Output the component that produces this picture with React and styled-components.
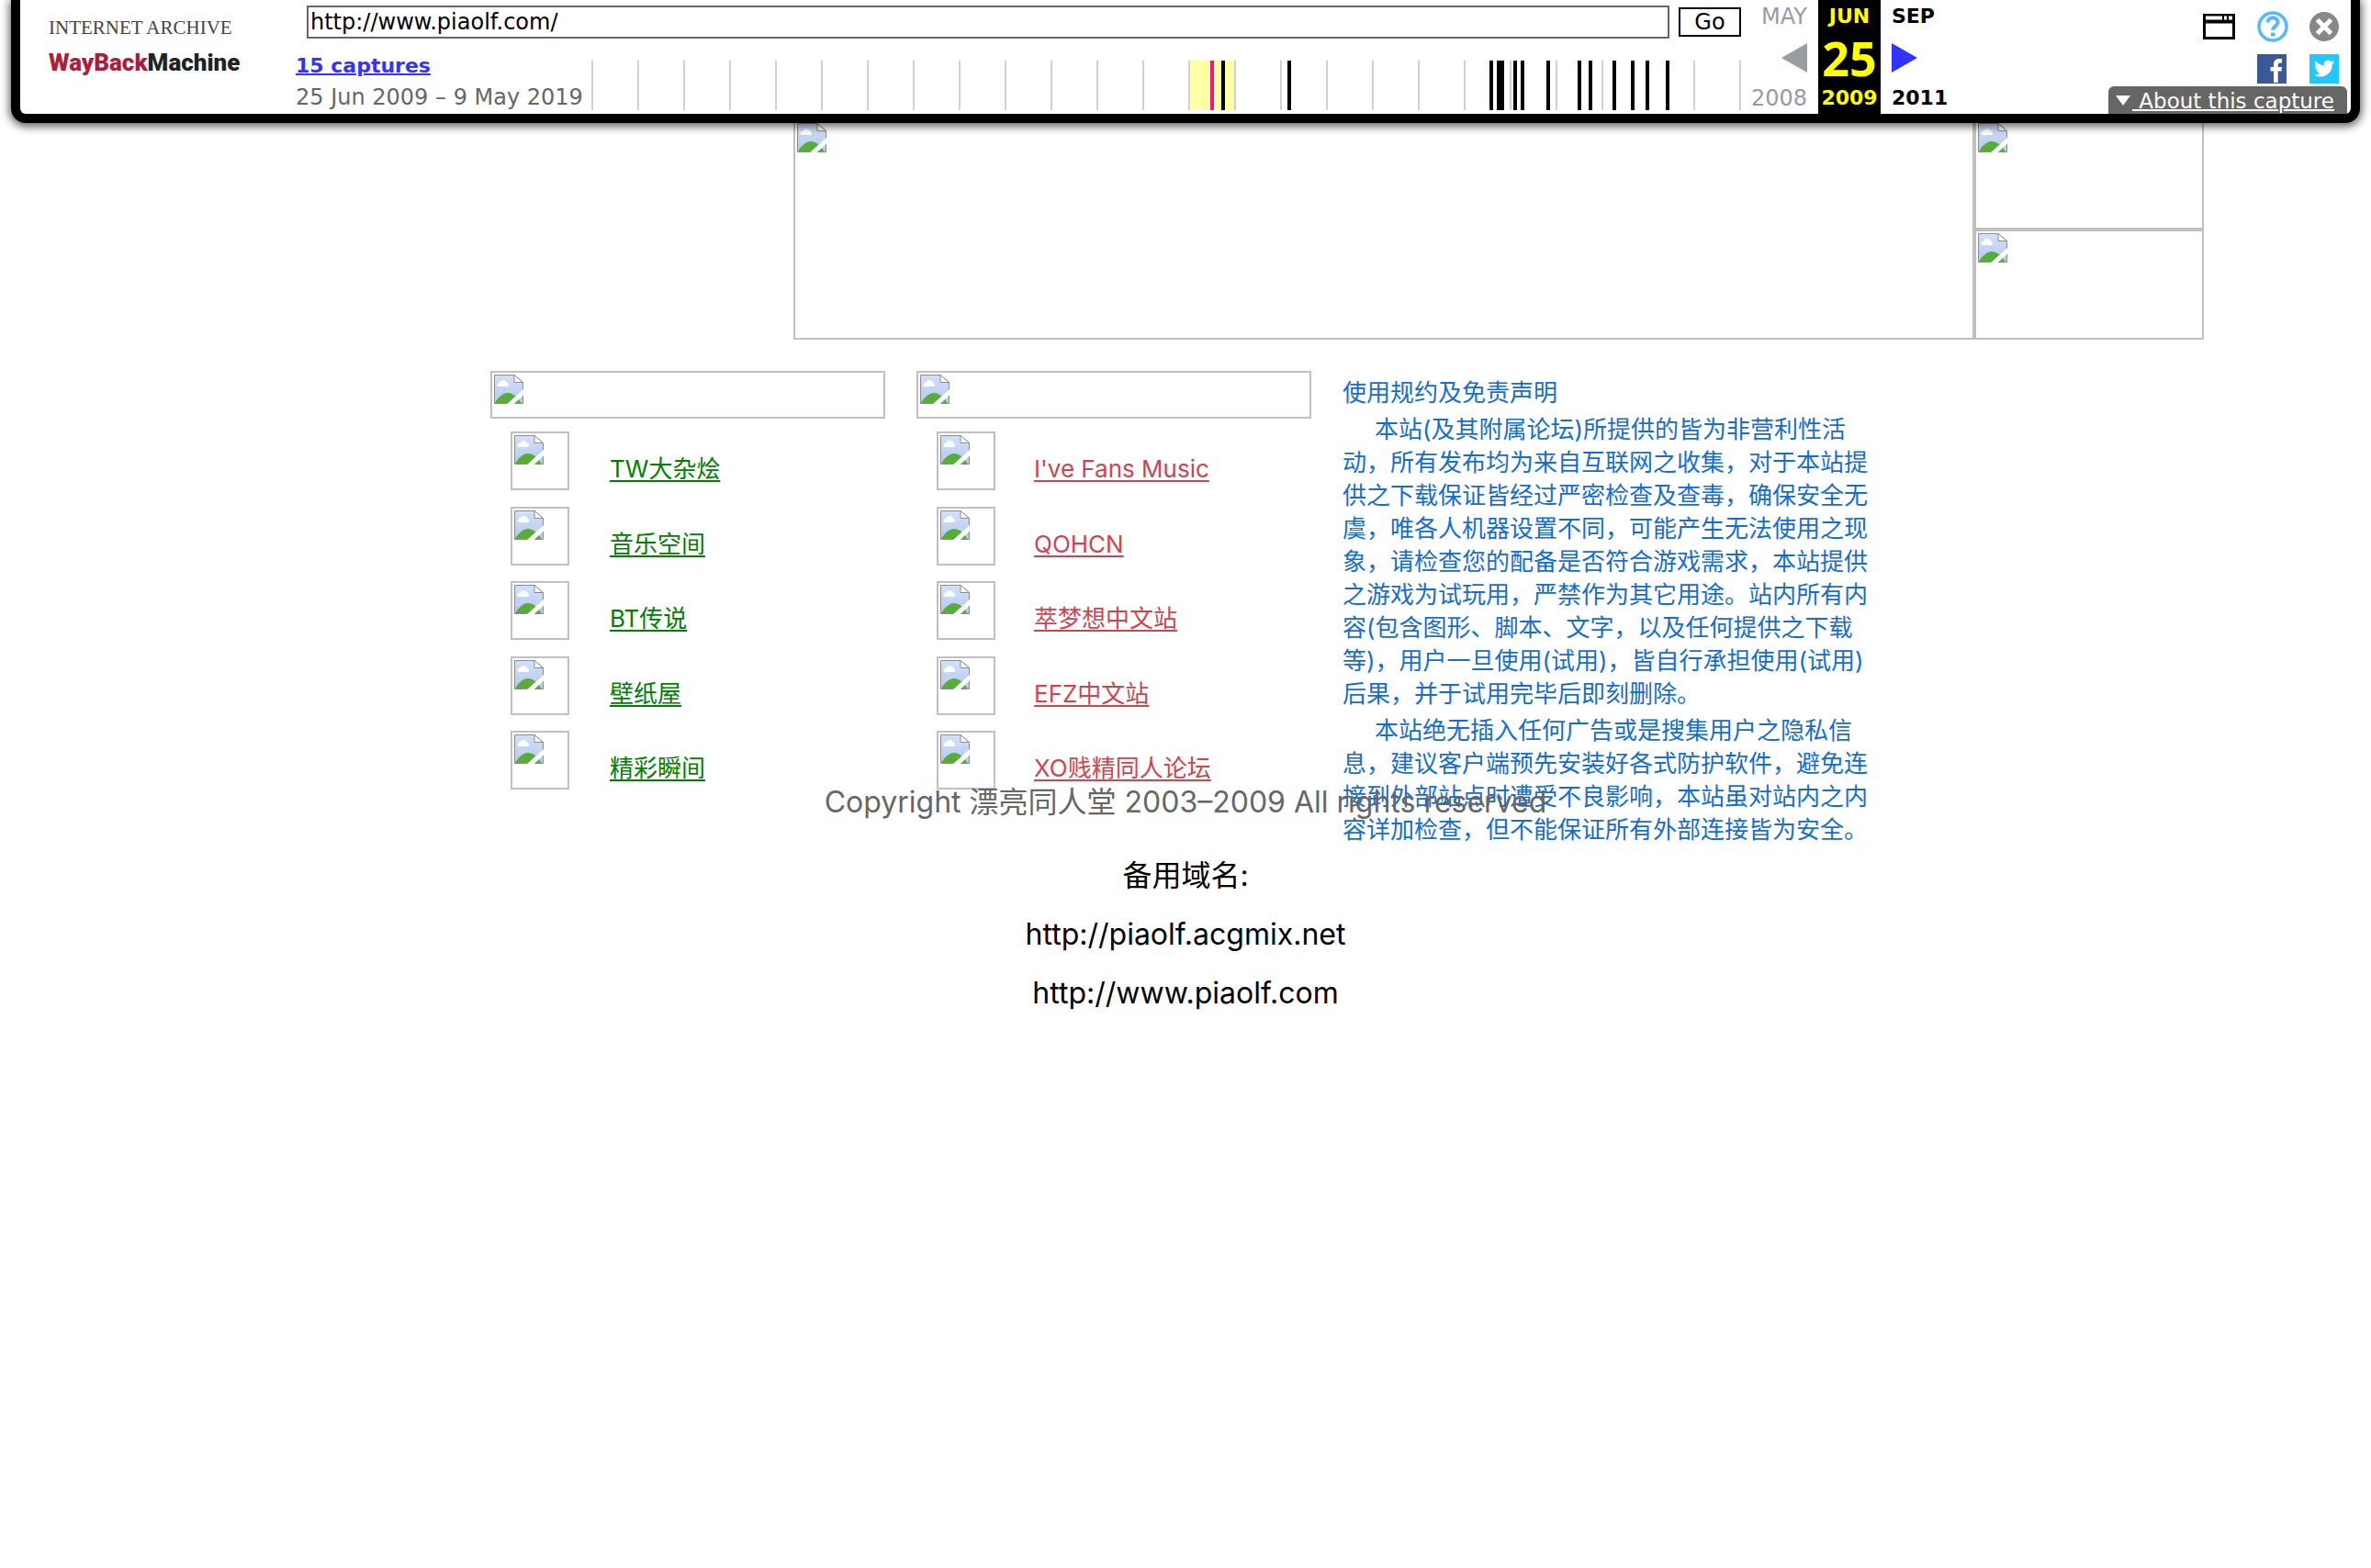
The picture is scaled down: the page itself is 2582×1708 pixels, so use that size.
import React from "react";
import styled, { createGlobalStyle } from "styled-components";

const GlobalStyle = createGlobalStyle`
  *, *::before, *::after { box-sizing: border-box; }
  body {
    margin: 0;
    background: #fff;
    color: #000;
    font-family: Inter, "Noto Sans CJK SC", sans-serif;
    text-spacing-trim: space-all;
  }
  p, h1, h2, ul { margin: 0; padding: 0; font-weight: 400; }
  a { color: inherit; }
`;

/* ---------- archive toolbar ---------- */

const Toolbar = styled.header`
  position: relative;
  z-index: 2;
  display: flex;
  height: 134px;
  margin: 0 12px;
  padding-left: 31px;
  background: #fff;
  border: 10px solid #000;
  border-top: 0;
  border-radius: 0 0 16px 16px;
  box-shadow: 0 2px 10px 2px rgba(0, 0, 0, 0.6);
  font-family: "DejaVu Sans", sans-serif;
  font-size: 24px;
  line-height: 34px;
`;

const Logo = styled.a`
  display: flex;
  flex-direction: column;
  width: 269px;
  padding-top: 20px;
  color: #222;
  text-decoration: none;
`;

const LogoTop = styled.span`
  font: 21px/20px "Liberation Serif", serif;
  color: #444;
`;

const LogoName = styled.span`
  font: 900 26px/56px Roboto, sans-serif;
`;

const LogoRed = styled.span`
  color: #b01c3c;
`;

const Center = styled.div`
  display: flex;
  flex-direction: column;
  gap: 24px;
  padding-top: 6px;
`;

const SearchRow = styled.form`
  display: flex;
  align-items: center;
  gap: 10px;
  height: 36px;
  padding-left: 12px;
`;

const UrlInput = styled.input`
  flex: 1;
  height: 36px;
  padding: 0 2px;
  border: 2px solid #666;
  border-radius: 0;
  background: #fff;
  color: #000;
  font: 24px/32px "DejaVu Sans", sans-serif;
  outline: 0;
`;

const GoButton = styled.button`
  width: 68px;
  height: 32px;
  padding: 0;
  border: 2px solid #000;
  background: #fff;
  color: #000;
  font: 24px/28px "DejaVu Sans", sans-serif;
`;

const CaptureRow = styled.div`
  display: flex;
`;

const CaptureInfo = styled.div`
  display: flex;
  flex-direction: column;
  width: 322px;
  margin-top: -11px;
  color: #666;
`;

const CaptureLink = styled.a`
  color: #33f;
  font-size: 22px;
  font-weight: 700;
  text-decoration-thickness: 2px;
`;

const Chart = styled.svg`
  display: block;
`;

const Months = styled.nav`
  display: flex;
`;

const Month = styled.div`
  display: flex;
  flex-direction: column;
  align-items: ${(p) => p.$align};
  justify-content: space-between;
  width: ${(p) => p.$width}px;
  height: 124px;
  padding: 1px ${(p) => p.$pad}px 0;
  background: ${(p) => p.$bg || "transparent"};
  color: ${(p) => p.$color};
  font-size: ${(p) => (p.$bold ? 22 : 24)}px;
  font-weight: ${(p) => (p.$bold ? 700 : 400)};
`;

const Day = styled.strong`
  font: bold 52px/50px "Noto Sans", sans-serif;
`;

const ArrowLink = styled.a`
  display: flex;
`;

const Tools = styled.div`
  display: flex;
  flex-direction: column;
  align-items: flex-end;
  justify-content: space-between;
  margin-left: auto;
  padding: 12px 4px 0 0;
`;

const IconGrid = styled.div`
  display: grid;
  grid-template-columns: 36px 34px 34px;
  grid-template-rows: 34px 34px;
  gap: 12px 23px;
  align-items: center;
  padding-right: 7px;
`;

const IconLink = styled.a`
  display: flex;
  grid-column: ${(p) => p.$col};
`;

const IconButton = styled.button`
  display: flex;
  padding: 0;
  border: 0;
  background: none;
`;

const About = styled.a`
  display: flex;
  align-items: center;
  gap: 2px;
  width: 260px;
  height: 30px;
  padding: 1px 8px 0;
  border-radius: 6px 6px 0 0;
  background: #666;
  color: #fff;
  font-size: 23px;
  line-height: 30px;
  text-decoration: none;
`;

const AboutText = styled.span`
  white-space: pre;
  text-decoration: underline 2px;
`;

/* ---------- archived page ---------- */

const Page = styled.main`
  width: 1514px;
  margin: -4px auto 0;
`;

const Hero = styled.div`
  display: grid;
  grid-template-columns: 1286px 250px;
  grid-template-rows: 120px 120px;
  width: max-content;
  margin-left: 330px;
`;

const Frame = styled.div`
  display: block;
  flex: none;
  width: ${(p) => p.$w || "auto"};
  height: ${(p) => p.$h || "auto"};
  grid-row: ${(p) => p.$rows || "auto"};
  padding: 2px;
  border: 2px solid #c0c0c0;
`;

const Columns = styled.div`
  display: grid;
  grid-template-columns: 430px 430px 1fr;
  gap: 34px;
  align-items: start;
  margin-top: 34px;
`;

const LinkColumn = styled.section`
  color: ${(p) => p.$color};
`;

const LinkList = styled.ul`
  display: grid;
  grid-auto-rows: 1fr;
  height: 408px;
  margin-top: 14px;
  padding-left: 22px;
  list-style: none;
`;

const LinkRow = styled.li`
  display: flex;
  gap: ${(p) => p.$gap}px;
`;

const SiteLink = styled.a`
  margin-top: 23px;
  font-size: 26px;
  line-height: 36px;
  text-decoration-thickness: 2px;
  text-underline-offset: 3px;
`;

const Disclaimer = styled.section`
  display: flex;
  flex-direction: column;
  gap: 4px;
  width: 580px;
  padding-top: 6px;
  color: #146dd0;
  font-size: 26px;
  line-height: 36px;
`;

const Title = styled.h2`
  font-size: 26px;
  line-height: 36px;
`;

const Clause = styled.p`
  text-indent: 35px;
`;

const Footer = styled.footer`
  position: relative;
  display: flex;
  flex-direction: column;
  align-items: center;
  gap: 24px;
  margin-top: -68px;
  font-size: 32px;
  line-height: 40px;
`;

const Copyright = styled.p`
  margin-bottom: 16px;
  color: #666;
`;

function BrokenIcon() {
  return (
    <svg width="32" height="32" viewBox="0 0 32 32" aria-hidden="true">
      <defs>
        <linearGradient id="sky" x1="0" y1="0" x2="0" y2="1">
          <stop offset="0" stopColor="#d3e1fb" />
          <stop offset="1" stopColor="#b4c8ec" />
        </linearGradient>
      </defs>
      <path d="M.5 .5H22L31.5 8.500V31.500H.5Z" fill="url(#sky)" stroke="#8c8c8c" />
      <path d="M22 .5V8.500H31.500Z" fill="#fff" stroke="#8c8c8c" />
      <path d="M4.500 13a2.300 2.300 0 0 1 1.500-4.200 4.500 4.500 0 0 1 8.300 0A2.300 2.300 0 0 1 15 13Z" fill="#fff" />
      <path d="M1 31C5 24 10 20 15 20c6 0 11 5 14.500 11Z" fill="#58ad38" />
      <path d="M13.500 32.500 32.500 15.500V22L21 32.500Z" fill="#fff" />
    </svg>
  );
}

function BrokenImage(props) {
  return (
    <Frame {...props}>
      <BrokenIcon />
    </Frame>
  );
}

const captures = [
  [688, 4], [760, 4], [980, 4], [990, 8], [1006, 4], [1014, 4], [1042, 4],
  [1076, 4], [1088, 4], [1114, 4], [1134, 4], [1150, 4], [1172, 4],
];

function CaptureChart() {
  const years = Array.from({ length: 26 }, (_, i) => i * 50);
  return (
    <Chart width="1252" height="54" viewBox="0 0 1252 54" aria-label="Captures per year">
      <rect x="652" width="48" height="54" fill="#ffffa5" />
      {years.map((x) => (
        <rect key={x} x={x} width="2" height="54" fill="#d0d0d0" />
      ))}
      {captures.map(([x, w]) => (
        <rect key={x} x={x - w / 2} width={w} height="54" fill="#000" />
      ))}
      <rect x="674" width="4" height="54" fill="#f0148c" />
    </Chart>
  );
}

const greenLinks = ["TW大杂烩", "音乐空间", "BT传说", "壁纸屋", "精彩瞬间"];
const redLinks = ["I've Fans Music", "QOHCN", "萃梦想中文站", "EFZ中文站", "XO贱精同人论坛"];

function LinkSection({ color, links, gap }) {
  return (
    <LinkColumn $color={color}>
      <BrokenImage $h="52px" />
      <LinkList>
        {links.map((t) => (
          <LinkRow key={t} $gap={gap}>
            <BrokenImage $w="64px" $h="64px" />
            <SiteLink href="#">{t}</SiteLink>
          </LinkRow>
        ))}
      </LinkList>
    </LinkColumn>
  );
}

export default function App() {
  return (
    <>
      <GlobalStyle />
      <Toolbar>
        <Logo href="#">
          <LogoTop>INTERNET ARCHIVE</LogoTop>
          <LogoName>
            <LogoRed>WayBack</LogoRed>Machine
          </LogoName>
        </Logo>
        <Center>
          <SearchRow onSubmit={(e) => e.preventDefault()}>
            <UrlInput aria-label="URL" defaultValue="http://www.piaolf.com/" />
            <GoButton type="submit">Go</GoButton>
          </SearchRow>
          <CaptureRow>
            <CaptureInfo>
              <CaptureLink href="#">15 captures</CaptureLink>
              <span>25 Jun 2009 – 9 May 2019</span>
            </CaptureInfo>
            <CaptureChart />
          </CaptureRow>
        </Center>
        <Months>
          <Month $width={84} $pad={12} $align="flex-end" $color="#99a">
            <span>MAY</span>
            <ArrowLink href="#" aria-label="Previous capture">
              <svg width="28" height="32" viewBox="0 0 28 32">
                <path d="M28 0V32L0 16Z" fill="#999ca0" />
              </svg>
            </ArrowLink>
            <span>2008</span>
          </Month>
          <Month $width={68} $pad={0} $align="center" $bg="#000" $color="#ff0" $bold>
            <span>JUN</span>
            <Day>25</Day>
            <span>2009</span>
          </Month>
          <Month $width={100} $pad={12} $align="flex-start" $color="#000" $bold>
            <span>SEP</span>
            <ArrowLink href="#" aria-label="Next capture">
              <svg width="28" height="32" viewBox="0 0 28 32">
                <path d="M0 0V32L28 16Z" fill="#33f" />
              </svg>
            </ArrowLink>
            <span>2011</span>
          </Month>
        </Months>
        <Tools>
          <IconGrid>
            <IconLink href="#" $col={1} aria-label="Screenshot">
              <svg width="35" height="30" viewBox="0 0 35 30">
                <path d="M0 1H35V29H0Z" fill="#000" />
                <path d="M3 3.500H21V7.500H3ZM23 3.500H26V7.500H23ZM28 3.500H32V7.500H28ZM3 11.500H32V26H3Z" fill="#fff" />
              </svg>
            </IconLink>
            <IconLink href="#" $col={2} aria-label="Help">
              <svg width="34" height="34" viewBox="0 0 34 34">
                <circle cx="17" cy="17" r="15" fill="#fff" stroke="#55baf8" strokeWidth="3.500" />
                <path d="M11.500 12.500c0-7 11.500-6.500 11 .2-.3 3.800-5.300 3.800-5.300 8" fill="none" stroke="#55baf8" strokeWidth="4.200" />
                <rect x="15" y="23.500" width="4.500" height="4" fill="#55baf8" />
              </svg>
            </IconLink>
            <IconButton type="button" aria-label="Close">
              <svg width="32" height="32" viewBox="0 0 32 32">
                <circle cx="16" cy="16" r="16" fill="#888" />
                <path d="M8.500 8.500 23.500 23.500M23.500 8.500 8.500 23.500" stroke="#fff" strokeWidth="5" />
              </svg>
            </IconButton>
            <IconLink href="#" $col={2} aria-label="Facebook">
              <svg width="32" height="32" viewBox="0 0 32 32">
                <rect width="32" height="32" fill="#3b5998" />
                <path d="M18 31V18.500H14.500V14H18V11C18 7 20.500 5 24 5H27V9.500H25C23.300 9.500 22.700 10.300 22.700 11.800V14H27L26.400 18.500H22.700V31Z" fill="#fff" />
              </svg>
            </IconLink>
            <IconLink href="#" $col={3} aria-label="Twitter">
              <svg width="32" height="32" viewBox="0 0 32 32">
                <rect width="32" height="32" fill="#20c8ff" />
                <path transform="translate(5 4.500) scale(.92)" d="M24 4.600a10 10 0 0 1-2.800.8 5 5 0 0 0 2.100-2.700 10 10 0 0 1-3.100 1.200 4.900 4.900 0 0 0-8.400 4.500A14 14 0 0 1 1.700 3.100a4.900 4.900 0 0 0 1.500 6.600 5 5 0 0 1-2.200-.6 4.900 4.900 0 0 0 3.900 4.900 5 5 0 0 1-2.200.1 4.900 4.900 0 0 0 4.600 3.400A10 10 0 0 1 0 19.500a14 14 0 0 0 21.500-12.400A10 10 0 0 0 24 4.600Z" fill="#fff" />
              </svg>
            </IconLink>
          </IconGrid>
          <About href="#">
            <svg width="16" height="11" viewBox="0 0 16 11" aria-hidden="true">
              <path d="M0 0H16L8 11Z" fill="#fff" />
            </svg>
            <AboutText> About this capture</AboutText>
          </About>
        </Tools>
      </Toolbar>

      <Page>
        <Hero>
          <BrokenImage $rows="1 / 3" />
          <BrokenImage />
          <BrokenImage />
        </Hero>
        <Columns>
          <LinkSection color="#008000" links={greenLinks} gap={44} />
          <LinkSection color="#cf454f" links={redLinks} gap={42} />
          <Disclaimer>
            <Title>使用规约及免责声明</Title>
            <Clause>
              本站(及其附属论坛)所提供的皆为非营利性活动，所有发布均为来自互联网之收集，对于本站提供之下载保证皆经过严密检查及查毒，确保安全无虞，唯各人机器设置不同，可能产生无法使用之现象，请检查您的配备是否符合游戏需求，本站提供之游戏为试玩用，严禁作为其它用途。站内所有内容(包含图形、脚本、文字，以及任何提供之下载等)，用户一旦使用(试用)，皆自行承担使用(试用)后果，并于试用完毕后即刻删除。
            </Clause>
            <Clause>
              本站绝无插入任何广告或是搜集用户之隐私信息，建议客户端预先安装好各式防护软件，避免连接到外部站点时遭受不良影响，本站虽对站内之内容详加检查，但不能保证所有外部连接皆为安全。
            </Clause>
          </Disclaimer>
        </Columns>
        <Footer>
          <Copyright>Copyright 漂亮同人堂 2003–2009 All rights reserved</Copyright>
          <p>备用域名:</p>
          <p>http://piaolf.acgmix.net</p>
          <p>http://www.piaolf.com</p>
        </Footer>
      </Page>
    </>
  );
}
